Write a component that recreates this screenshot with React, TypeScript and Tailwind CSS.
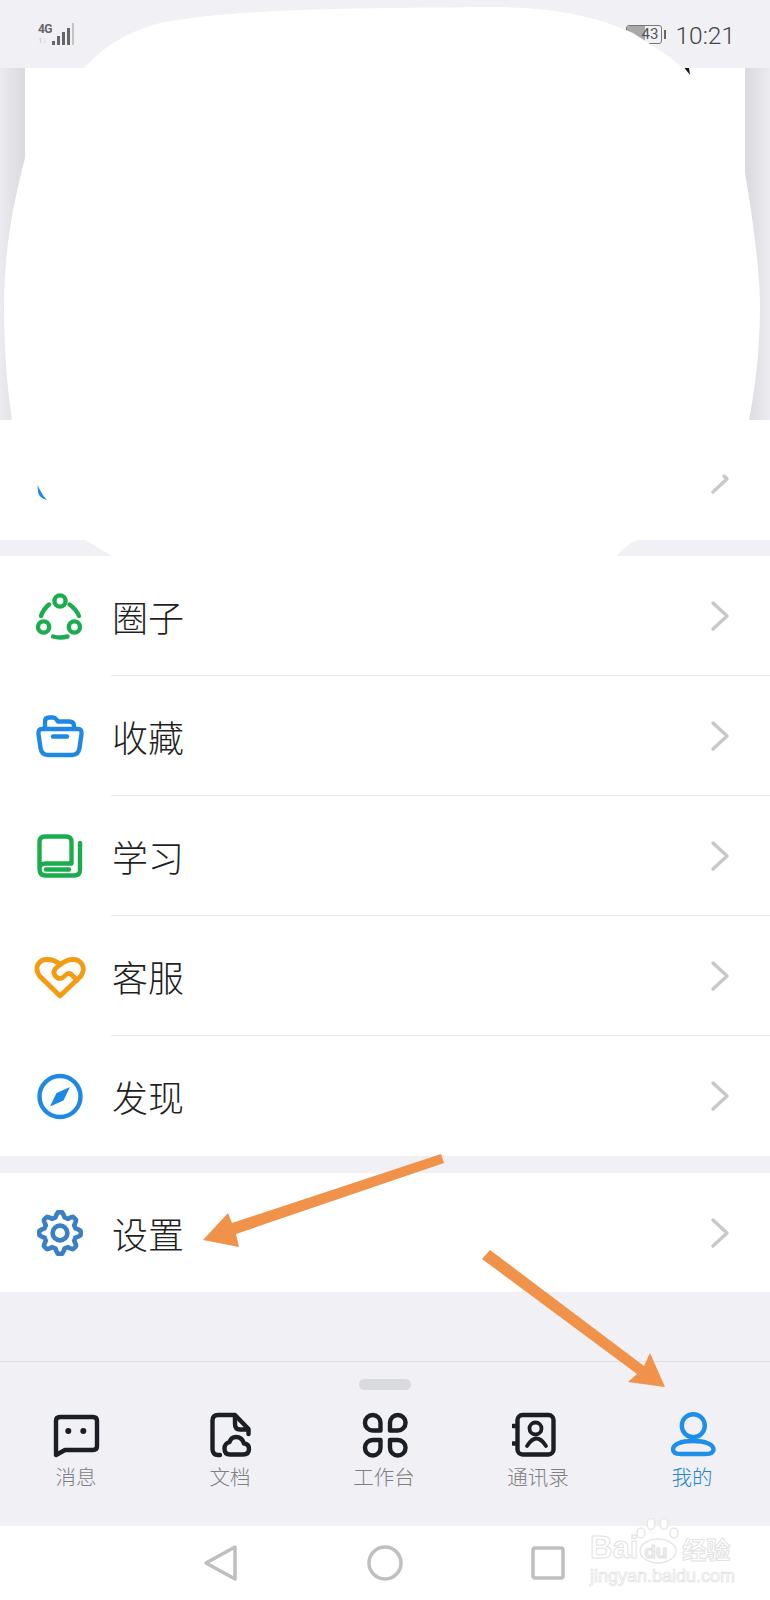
import React from "react";

const CJK = "font-['Noto_Sans_CJK_SC','Noto_Sans',sans-serif]";

function Chevron() {
  return (
    <svg width="20" height="32" viewBox="0 0 20 32" fill="none" className="shrink-0">
      <path d="M3 3 L17 16 L3 29" stroke="#c8c8c8" strokeWidth="3.4" strokeLinecap="round" strokeLinejoin="round" />
    </svg>
  );
}

const G = "#1aad4d";
const B = "#1e88e5";

function IconCircle() {
  return (
    <svg width="48" height="48" viewBox="0 0 48 48" fill="none" stroke={G} strokeWidth="4.4" strokeLinecap="round" className="overflow-visible">
      <circle cx="24" cy="9" r="5.6" />
      <circle cx="7.6" cy="35" r="5.6" />
      <circle cx="38.4" cy="35" r="5.6" />
      <path d="M5 24 Q7.5 17 13 12.5" />
      <path d="M33.5 12.5 Q40 17 43 24" />
      <path d="M17 44.5 Q24 46.5 31.5 44.5" />
    </svg>
  );
}
function IconFolder() {
  return (
    <svg width="48" height="48" viewBox="0 0 48 48" fill="none" stroke={B} strokeWidth="4.4" strokeLinecap="round" strokeLinejoin="round" className="overflow-visible">
      <path d="M6 17 H42 Q46 17 45.5 22 L43.5 36 Q42.5 43 36 43 H12 Q5.5 43 4.5 36 L2.5 22 Q2 17 6 17 Z" />
      <path d="M9 16 V9.5 Q9 5.5 13 5.5 H17 Q19 5.5 20.5 7.5 L22 9.5 H33 Q38 9.5 38 14 V16" />
      <path d="M17 24.5 H31" />
    </svg>
  );
}
function IconBook() {
  return (
    <svg width="48" height="48" viewBox="0 0 48 48" fill="none" stroke={G} strokeWidth="4.4" strokeLinecap="round" strokeLinejoin="round" className="overflow-visible">
      <path d="M3.5 37 V10 Q3.5 4.5 9 4.5 H30 Q35.5 4.5 35.5 10 V31.5 H10 Q3.5 31.5 3.5 37 Q3.5 43.5 10 43.5 H38 Q44 43.5 44 38 V11" />
      <path d="M10 37.5 H33" />
    </svg>
  );
}
function IconHeart() {
  return (
    <svg width="48" height="48" viewBox="0 0 48 48" fill="none" stroke="#f39c12" strokeWidth="4.8" strokeLinecap="round" strokeLinejoin="round" className="overflow-visible">
      <path d="M24 44 L3.5 24 C-3 14 4 7.5 11 7.5 C16 7.5 21 9.5 24.5 12.5 C28 9.5 32 7.5 37 7.5 C44 7.5 51 14 45 24 Z" />
      <path d="M25 12 L19.5 16.5 Q16.5 20 19 23.5 Q22 27.5 26 26 L31 22 Q33.5 20.5 36 23 L41 28" />
    </svg>
  );
}
function IconCompass() {
  return (
    <svg width="48" height="48" viewBox="0 0 48 48" fill="none" className="overflow-visible">
      <circle cx="24" cy="24.5" r="20.5" stroke={B} strokeWidth="4.4" />
      <path d="M34 15 L27.5 28.5 L14 34.5 L20.5 21 Z" fill={B} />
    </svg>
  );
}
function gearPath() {
  const pts: string[] = [];
  for (let i = 0; i < 240; i++) {
    const t = (i / 240) * Math.PI * 2;
    const w = Math.cos(8 * t);
    const r = 18.4 + 2.3 * Math.max(-1, Math.min(1, w * 1.5));
    pts.push(`${(24 + r * Math.sin(t)).toFixed(2)} ${(24 + r * Math.cos(t)).toFixed(2)}`);
  }
  return "M" + pts.join(" L") + " Z";
}
function IconGear() {
  return (
    <svg width="48" height="48" viewBox="0 0 48 48" fill="none" stroke="#3b7fc4" strokeWidth="4.6" strokeLinejoin="round" className="overflow-visible">
      <path d={gearPath()} />
      <circle cx="24" cy="24" r="7.4" />
    </svg>
  );
}

const D = "#1b1e25";
function TabMsg() {
  return (
    <svg width="48" height="48" viewBox="0 0 48 48" fill="none" stroke={D} strokeWidth="4.4" strokeLinejoin="round" className="-translate-x-[1px]">
      <path d="M4 44 V10 Q4 6 8 6 H41 Q45 6 45 10 V35 Q45 39 41 39 H13 L4 44 Z" />
      <circle cx="16.3" cy="20" r="3" fill={D} stroke="none" />
      <circle cx="31.3" cy="20" r="3" fill={D} stroke="none" />
    </svg>
  );
}
function TabDoc() {
  return (
    <svg width="48" height="48" viewBox="0 0 48 48" fill="none" stroke={D} strokeWidth="4.4" strokeLinecap="round" strokeLinejoin="round" className="-translate-x-[1px]">
      <path d="M14 44 H12 Q6.5 44 6.5 38 V9.5 Q6.5 4 12 4 H29 L42.5 18 V23" />
      <path d="M29 5 V13 Q29 18.5 34 18.5 H42" />
      <path d="M24 43.5 H37 Q43 43.5 43 38 Q43 33 38 32.5 Q36 26 30 26 Q25 26 23.5 31 Q18.5 32.5 18.5 37.5 Q18.5 43.5 24 43.5 Z" />
    </svg>
  );
}
function TabWork() {
  return (
    <svg width="48" height="48" viewBox="0 0 48 48" fill="none" stroke={D} strokeWidth="4.4" strokeLinejoin="round">
      <path d="M11.7 4 A7.75 7.75 0 0 1 19.5 11.75 V19.5 H11.7 A7.75 7.75 0 0 1 11.7 4 Z" />
      <path d="M36.8 4 A7.75 7.75 0 0 0 29 11.75 V19.5 H36.8 A7.75 7.75 0 0 0 36.8 4 Z" />
      <path d="M11.7 44.5 A7.75 7.75 0 0 1 11.7 29 H19.5 V36.75 A7.75 7.75 0 0 1 11.7 44.5 Z" />
      <path d="M36.8 44.5 A7.75 7.75 0 0 0 36.8 29 H29 V36.75 A7.75 7.75 0 0 0 36.8 44.5 Z" />
    </svg>
  );
}
function TabBook() {
  return (
    <svg width="48" height="48" viewBox="0 0 48 48" fill="none" stroke={D} strokeWidth="4.4" strokeLinecap="round" strokeLinejoin="round" className="-translate-x-[3px]">
      <rect x="5.5" y="4" width="36" height="39.5" rx="5" />
      <path d="M1 15 H5 M1 32.5 H5" />
      <circle cx="23.5" cy="17.5" r="6" strokeWidth="3.8" />
      <path d="M15 35 Q24.5 20 34 35" strokeWidth="3.8" />
    </svg>
  );
}
function TabMe() {
  const C = "#1e8fe8";
  return (
    <svg width="48" height="48" viewBox="0 0 48 48" fill="none" stroke={C} strokeWidth="4.4">
      <circle cx="24.3" cy="14.7" r="11.5" />
      <path d="M12 43 H36 Q44.5 43 44.5 38.5 C44.5 33 36 30 24 30 C12 30 4 33 4 38.5 Q4 43 12 43 Z" />
    </svg>
  );
}

function Row({ icon, label, divider }: { icon: React.ReactNode; label: string; divider?: boolean }) {
  return (
    <div className="relative flex h-full items-center bg-white pl-[36px] pr-[40px]">
      <div className="flex h-[48px] w-[48px] shrink-0 items-center justify-center">{icon}</div>
      <div className={`${CJK} ml-[28px] flex-1 text-[36px] font-light leading-none text-[#1f1f1f]`}>{label}</div>
      <Chevron />
      {divider && <div className="absolute bottom-0 left-[111px] right-0 h-px bg-[#e8e8ec]" />}
    </div>
  );
}

function Tab({ icon, label, active }: { icon: React.ReactNode; label: string; active?: boolean }) {
  return (
    <div className="flex flex-1 flex-col items-center">
      <div className="h-[48px]">{icon}</div>
      <div className={`${CJK} -translate-x-[1px] mt-[3px] text-[20.5px] font-light leading-[28px] ${active ? "text-[#1f86cf]" : "text-[#808084]"}`}>{label}</div>
    </div>
  );
}

export default function App() {
  return (
    <div className="relative h-[1600px] w-[770px] overflow-hidden bg-[#f0f0f5]">
      {/* status bar */}
      <div className="flex h-[68px] items-start justify-between pl-[38px] pr-[35px] pt-[23px]">
        <div className="flex items-end">
          <div className="flex w-[14px] flex-col">
            <span className="font-['Roboto',sans-serif] text-[12px] font-bold leading-[13px] tracking-tighter text-[#666]">4G</span>
            <span className="font-['Roboto',sans-serif] text-[8px] leading-[9px] text-[#c4c4c4]">1↓</span>
          </div>
          <div className="flex items-end gap-[2px]">
            <div className="h-[4px] w-[3px] bg-[#666]" />
            <div className="h-[9px] w-[3px] bg-[#666]" />
            <div className="h-[13px] w-[3px] bg-[#666]" />
            <div className="h-[17px] w-[3px] bg-[#666]" />
            <div className="h-[22px] w-[2px] bg-[#c4c4c4]" />
          </div>
        </div>
        <div className="flex items-center">
          <div className="relative flex h-[19px] w-[36px] -translate-y-[3px] items-center justify-end overflow-hidden rounded-[3px] border border-[#777] pr-[3px] font-['Roboto',sans-serif] text-[15px] leading-none text-[#555]">
            <div className="absolute inset-y-0 left-0 w-[18px] bg-[#a8a8a8]" />
            <span className="relative">43</span>
          </div>
          <div className="ml-[2px] mr-[9px] h-[9px] w-[2px] -translate-y-[3px] bg-[#666]" />
          <span className="-translate-y-[1px] font-['Roboto',sans-serif] text-[24.5px] font-light leading-[28px] text-[#444]">10:21</span>
        </div>
      </div>

      {/* header area, side strips around the card */}
      <div className="flex h-[352px]">
        <div className="w-[25px] bg-gradient-to-r from-[#ececf0] to-[#dadade]" />
        <div className="flex-1 bg-white" />
        <div className="w-[25px] bg-gradient-to-r from-[#dadade] to-[#ececf0]" />
      </div>

      {/* hidden row */}
      <div className="h-[120px] bg-white" />
      <div className="h-[16px]" />

      {/* list */}
      <div className="grid h-[600px] grid-rows-5">
        <Row icon={<IconCircle />} label="圈子" divider />
        <Row icon={<IconFolder />} label="收藏" divider />
        <Row icon={<IconBook />} label="学习" divider />
        <Row icon={<IconHeart />} label="客服" divider />
        <Row icon={<IconCompass />} label="发现" />
      </div>
      <div className="h-[17px]" />
      <div className="h-[119px]">
        <Row icon={<IconGear />} label="设置" />
      </div>
      <div className="h-[69px]" />

      {/* tab bar */}
      <div className="h-[165px] border-t border-[#dcdce2] pt-[17px]">
        <div className="mx-auto h-[11px] w-[52px] rounded-full bg-[#d8dade]" />
        <div className="mt-[21px] flex">
          <Tab icon={<TabMsg />} label="消息" />
          <Tab icon={<TabDoc />} label="文档" />
          <Tab icon={<TabWork />} label="工作台" />
          <Tab icon={<TabBook />} label="通讯录" />
          <Tab icon={<TabMe />} label="我的" active />
        </div>
      </div>

      {/* system nav */}
      <div className="flex h-[74px] items-center bg-white pl-[203px]">
        <svg width="34" height="38" viewBox="0 0 34 38" fill="none" stroke="#bfbfbf" strokeWidth="3.5" strokeLinejoin="round">
          <path d="M3 19 L32 3 V35 Z" />
        </svg>
        <svg width="36" height="36" viewBox="0 0 36 36" fill="none" stroke="#bfbfbf" strokeWidth="3.5" className="ml-[130px]">
          <circle cx="18" cy="18" r="16" />
        </svg>
        <svg width="34" height="34" viewBox="0 0 34 34" fill="none" stroke="#bfbfbf" strokeWidth="3.5" strokeLinejoin="round" className="ml-[128px]">
          <rect x="2" y="2" width="30" height="30" rx="2" />
        </svg>
      </div>

      {/* white redaction blob lying over the page */}
      <svg className="pointer-events-none absolute left-0 top-0" width="770" height="560" viewBox="0 0 770 560">
        <path
          fill="#ffffff"
          d="M84 68 C105 45 130 30 165 22 C230 10 330 8 500 7 C560 8 600 18 633 33 L667 55 L683 68 L745 68 L745 173 C755 230 760 280 760 305 C760 350 755 390 749 420 L749 540 L638 540 Q626 544 617 556 L112 556 L85 540 L12 420 C6 380 4 340 4 305 C4 250 14 200 25 158 L25 68 Z"
        />
        <path d="M684.5 68 L689 68 L690 75 Z" fill="#111" />
        <path d="M37.5 485 L38 492 Q39 498 47 500 Q42 495 37.5 485 Z" fill="#1e88e5" />
        <path d="M713 492 L727 479 L724 476" fill="none" stroke="#c8c8c8" strokeWidth="3.4" strokeLinecap="round" strokeLinejoin="round" />
      </svg>

      {/* annotation arrows */}
      <svg className="pointer-events-none absolute left-0 top-0" width="770" height="1600" viewBox="0 0 770 1600">
        <path fill="#f0924a" d="M441 1154 L444 1163 L236 1234 L239 1247 L203 1240 L228 1213 L232 1223 Z" />
        <path fill="#f0924a" d="M490 1250 L482 1259 L637 1374 L628 1382 L665 1387 L650 1353 L644 1366 Z" />
      </svg>

      {/* watermark */}
      <div className="pointer-events-none absolute left-[590px] top-[1518px] w-[142px]">
        <svg className="absolute left-[46px] top-0" width="46" height="46" viewBox="0 0 46 46" fill="#ffffff" stroke="#e6e6e6" strokeWidth="1.5">
          <ellipse cx="5" cy="15" rx="4" ry="5" />
          <ellipse cx="15" cy="6" rx="4" ry="5.5" />
          <ellipse cx="28" cy="6" rx="4" ry="5.5" />
          <ellipse cx="38" cy="15" rx="4" ry="5" />
          <ellipse cx="22" cy="33" rx="18" ry="12" />
        </svg>
        <div className="relative flex h-[46px] items-end font-['Liberation_Sans',sans-serif] font-bold leading-none text-white [-webkit-text-stroke:1px_#e2e2e2]">
          <span className="text-[31px] leading-[32px]">Bai</span>
          <span className="ml-[6px] w-[38px] text-[19px] leading-[24px] text-[#eeeeee]">du</span>
          <span className={`${CJK} text-[24px] leading-[30px]`}>经验</span>
        </div>
        <div className="relative mt-[3px] font-['Liberation_Sans',sans-serif] text-[18px] leading-[18px] text-white [-webkit-text-stroke:0.7px_#e0e0e0]">jingyan.baidu.com</div>
      </div>
    </div>
  );
}
